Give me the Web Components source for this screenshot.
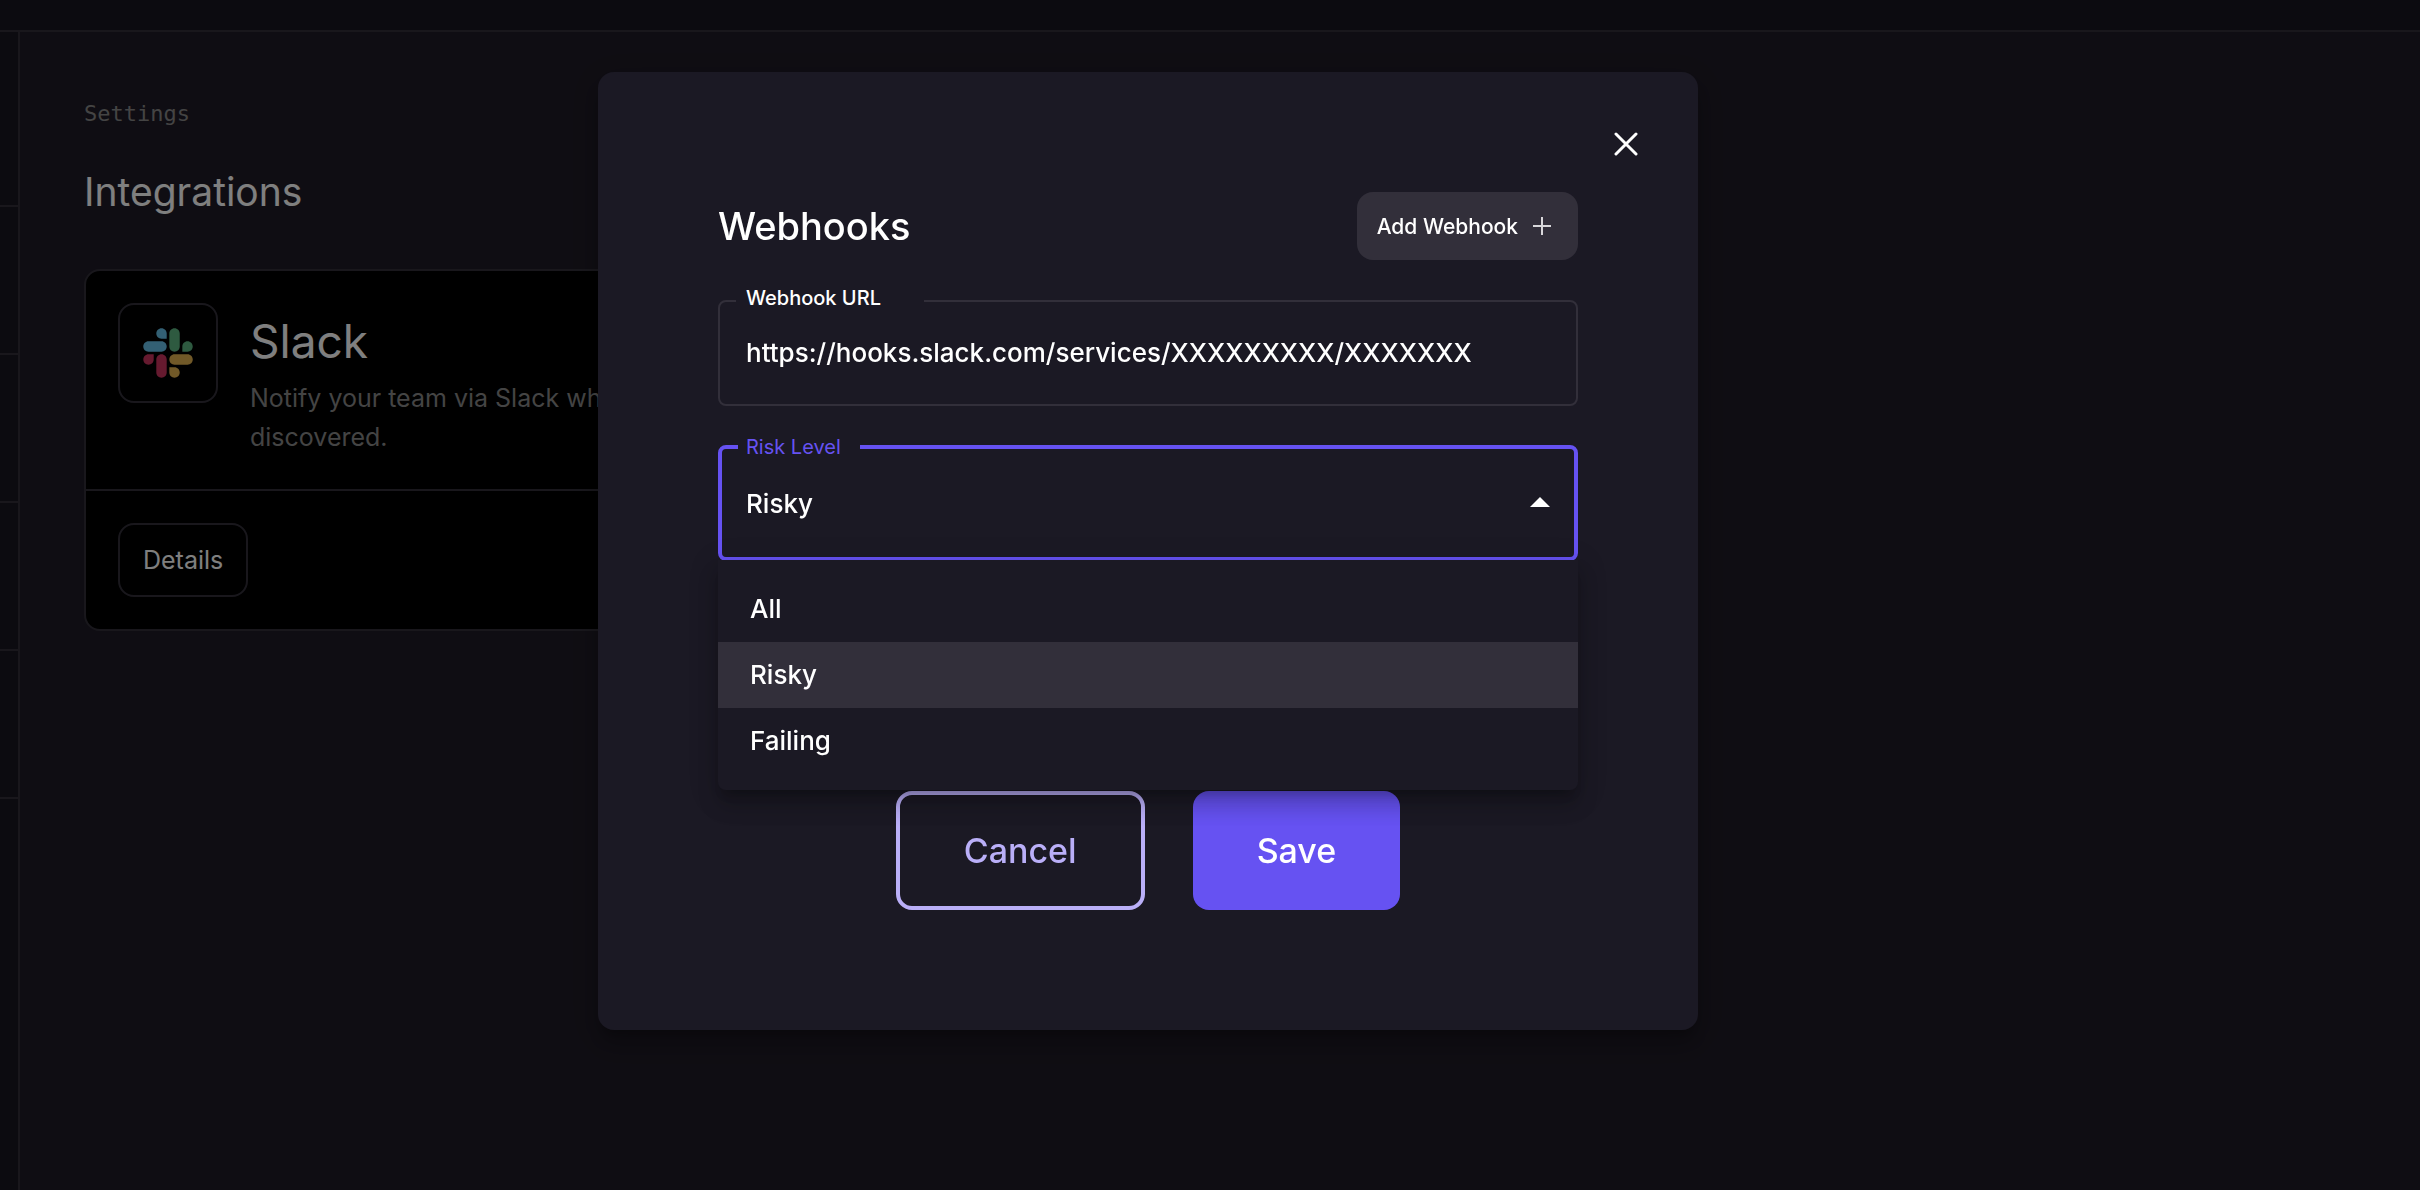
<!DOCTYPE html>
<html lang="en">
<head>
<meta charset="utf-8">
<title>Integrations</title>
<style>
html, body {
    height: 100%;
}
body {
    margin: 0;
    background: #1f1b26;
    color: #fff;
    font-family: Inter, "Liberation Sans", sans-serif;
    --surface: #1b1924;
    --line: #322f3a;
    --accent: #6652f2;
    --accent-light: #baaff8;
}
</style>
</head>
<body>

<app-shell>
    <settings-page section="Settings" heading="Integrations">
        <integration-card name="Slack">
            <slack-logo slot="logo"></slack-logo>
            Notify your team via Slack when issues are discovered.
        </integration-card>
    </settings-page>
</app-shell>

<modal-dialog heading="Webhooks">
    <app-button slot="action" variant="tonal">Add Webhook
        <svg slot="icon" width="20" height="20" viewBox="0 0 20 20" fill="none" stroke="#d8d7da" stroke-width="2"><path d="M10 1v18M1 10h18"/></svg>
    </app-button>
    <text-field label="Webhook URL" value="https://hooks.slack.com/services/XXXXXXXXX/XXXXXXX"></text-field>
    <select-field label="Risk Level" value="Risky" options="All,Risky,Failing"></select-field>
    <app-button slot="footer" variant="outlined">Cancel</app-button>
    <app-button slot="footer" variant="filled">Save</app-button>
</modal-dialog>

<script>
function makeTemplate(html) {
    const template = document.createElement('template');
    template.innerHTML = html;
    return template;
}

class BaseElement extends HTMLElement {
    constructor() {
        super();
        this.attachShadow({mode: 'open'});
        this.shadowRoot.appendChild(this.constructor.template.content.cloneNode(true));
    }

    $(selector) {
        return this.shadowRoot.querySelector(selector);
    }
}

class AppShell extends BaseElement {
    static template = makeTemplate(`
<style>
:host {
    display: grid;
    grid-template: 32px 1fr / 20px 1fr;
    min-height: 100vh;
}
* {
    box-sizing: border-box;
}
header {
    grid-column: 1 / 3;
    background: #181620;
    border-bottom: 2px solid #322f39;
}
nav {
    padding-top: 27px;
    background: #181620;
    border-right: 2px solid #322f39;
}
nav div {
    height: 148px;
    border-bottom: 2px solid #322f39;
}
</style>
<header></header>
<nav><div></div><div></div><div></div><div></div><div></div></nav>
<main><slot></slot></main>
`);
}

class SettingsPage extends BaseElement {
    static template = makeTemplate(`
<style>
:host {
    display: block;
    padding: 64px;
}
p {
    margin: 0 0 36px;
    color: #888;
    font: 22px/36px "DejaVu Sans Mono", monospace;
}
h1 {
    margin: 0 0 53px;
    font-size: 39px;
    line-height: 48px;
    font-weight: 400;
}
.cards {
    display: grid;
    grid-template-columns: repeat(3, 1fr);
    gap: 40px;
}
</style>
<p></p>
<h1></h1>
<div class="cards"><slot></slot></div>
`);

    constructor() {
        super();
        this.$('p').textContent = this.getAttribute('section');
        this.$('h1').textContent = this.getAttribute('heading');
    }
}

class IntegrationCard extends BaseElement {
    static template = makeTemplate(`
<style>
:host {
    display: block;
    border: 2px solid #322f39;
    border-radius: 16px;
    background: #000;
}
.info {
    display: flex;
    gap: 32px;
    padding: 32px;
    border-bottom: 2px solid #322f39;
}
.logo {
    display: grid;
    place-items: center;
    box-sizing: border-box;
    flex: none;
    width: 100px;
    height: 100px;
    border: 2px solid #322f39;
    border-radius: 16px;
}
h2 {
    margin: 0;
    font-size: 46px;
    line-height: 76px;
    font-weight: 400;
}
p {
    margin: 0;
    color: #888;
    font-size: 25px;
    line-height: 39px;
}
.actions {
    display: flex;
    padding: 32px;
}
button {
    height: 74px;
    padding: 0 23px;
    border: 2px solid #322f39;
    border-radius: 16px;
    background: none;
    color: inherit;
    font: inherit;
    font-size: 25px;
}
</style>
<div class="info">
    <div class="logo"><slot name="logo"></slot></div>
    <div>
    <h2></h2>
    <p><slot></slot></p>
    </div>
</div>
<div class="actions"><button type="button">Details</button></div>
`);

    constructor() {
        super();
        this.$('h2').textContent = this.getAttribute('name');
    }
}

class SlackLogo extends BaseElement {
    static template = makeTemplate(`
<style>
:host, svg {
    display: block;
}
</style>
<svg width="50" height="50" viewBox="0 0 127 127" aria-hidden="true">
<path fill="#cc345f" d="M27.2 80c0 7.3-5.9 13.2-13.2 13.2S.8 87.3.8 80s5.9-13.2 13.2-13.2h13.2V80zm6.6 0c0-7.3 5.9-13.2 13.2-13.2s13.2 5.9 13.2 13.2v33c0 7.3-5.9 13.2-13.2 13.2s-13.2-5.9-13.2-13.2V80z"/>
<path fill="#66c0e8" d="M47 27c-7.3 0-13.2-5.9-13.2-13.2S39.7.6 47 .6s13.2 5.9 13.2 13.2V27H47zm0 6.7c7.3 0 13.2 5.9 13.2 13.2S54.3 60.1 47 60.1H13.9C6.6 60.1.7 54.2.7 46.9s5.9-13.2 13.2-13.2H47z"/>
<path fill="#5cb480" d="M99.9 46.9c0-7.3 5.9-13.2 13.2-13.2s13.2 5.9 13.2 13.2-5.9 13.2-13.2 13.2H99.9V46.9zm-6.6 0c0 7.3-5.9 13.2-13.2 13.2s-13.2-5.9-13.2-13.2V13.8C66.9 6.5 72.8.6 80.1.6s13.2 5.9 13.2 13.2v33.1z"/>
<path fill="#e2b250" d="M80.1 99.8c7.3 0 13.2 5.9 13.2 13.2s-5.9 13.2-13.2 13.2-13.2-5.9-13.2-13.2V99.8h13.2zm0-6.6c-7.3 0-13.2-5.9-13.2-13.2s5.9-13.2 13.2-13.2h33.1c7.3 0 13.2 5.9 13.2 13.2s-5.9 13.2-13.2 13.2H80.1z"/>
</svg>
`);
}

class ModalDialog extends BaseElement {
    static template = makeTemplate(`
<style>
:host {
    position: fixed;
    inset: 0;
    display: flex;
    justify-content: center;
    align-items: flex-start;
    padding: 72px 124px 72px 0;
    background: rgba(0, 0, 0, .5);
}
.paper {
    position: relative;
    box-sizing: border-box;
    width: 1100px;
    max-width: 100%;
    padding: 120px;
    border-radius: 16px;
    background: var(--surface);
    box-shadow: 0 10px 10px -6px rgba(0, 0, 0, .2), 0 16px 20px 2px rgba(0, 0, 0, .14), 0 6px 28px 4px rgba(0, 0, 0, .12);
}
.close {
    position: absolute;
    top: 52px;
    right: 52px;
    padding: 8px;
    border: 0;
    background: none;
}
svg {
    display: block;
}
header {
    display: flex;
    justify-content: space-between;
    align-items: center;
    margin-bottom: 40px;
}
h2 {
    margin: 0;
    font-size: 38px;
    line-height: 48px;
    font-weight: 500;
}
.fields {
    display: grid;
    gap: 39px;
}
footer {
    display: flex;
    justify-content: center;
    gap: 48px;
    margin-top: 230px;
}
</style>
<section class="paper" role="dialog" aria-labelledby="title">
    <button class="close" type="button" aria-label="Close">
        <svg width="24" height="24" viewBox="0 0 24 24" fill="none" stroke="#fff" stroke-width="3" stroke-linecap="round"><path d="M2 2l20 20M22 2L2 22"/></svg>
    </button>
    <header>
        <h2 id="title"></h2>
        <slot name="action"></slot>
    </header>
    <div class="fields"><slot></slot></div>
    <footer><slot name="footer"></slot></footer>
</section>
`);

    constructor() {
        super();
        this.$('h2').textContent = this.getAttribute('heading');
    }

    connectedCallback() {
        this.$('.close').addEventListener('click', () => this.remove());
    }
}

class AppButton extends BaseElement {
    static template = makeTemplate(`
<style>
:host {
    display: block;
}
button {
    display: flex;
    align-items: center;
    gap: 14px;
    box-sizing: border-box;
    height: 119px;
    padding: 0 64px;
    border: 0;
    border-radius: 16px;
    color: #fff;
    font: inherit;
    font-size: 34px;
    font-weight: 500;
}
:host([variant="tonal"]) button {
    height: 68px;
    padding: 0 26px 0 20px;
    background: var(--line);
    font-size: 21px;
}
:host([variant="outlined"]) button {
    border: 4px solid var(--accent-light);
    background: none;
    color: var(--accent-light);
}
:host([variant="filled"]) button {
    background: var(--accent);
}
</style>
<button type="button"><span><slot></slot></span><slot name="icon"></slot></button>
`);
}

// shared by the text box and the drop-down
const fieldStyle = `
:host {
    display: block;
    position: relative;
}
.box {
    position: relative;
    box-sizing: border-box;
    border: 2px solid var(--line);
    border-radius: 8px;
}
label {
    position: absolute;
    top: -16px;
    left: 16px;
    box-sizing: border-box;
    padding-left: 10px;
    background: var(--surface);
    font-size: 20px;
    line-height: 24px;
    font-weight: 500;
}
input, select {
    display: block;
    box-sizing: border-box;
    width: 100%;
    height: 100%;
    margin: 0;
    border: 0;
    outline: 0;
    background: none;
    color: inherit;
    font: inherit;
    font-size: 26px;
    font-weight: 450;
    appearance: none;
}
`;

class TextField extends BaseElement {
    static template = makeTemplate(`
<style>
${fieldStyle}
.box {
    height: 106px;
}
label {
    width: 188px;
}
input {
    padding: 0 26px 2px;
}
</style>
<div class="box">
    <input id="control" type="text">
    <label for="control"></label>
</div>
`);

    constructor() {
        super();
        this.$('label').textContent = this.getAttribute('label');
        this.$('input').value = this.getAttribute('value');
    }
}

class SelectField extends BaseElement {
    static template = makeTemplate(`
<style>
${fieldStyle}
.box {
    height: 116px;
    border: 4px solid var(--accent);
}
label {
    top: -14px;
    width: 122px;
    padding-left: 8px;
    color: var(--accent);
    font-weight: 400;
}
select {
    padding: 0 24px;
}
svg {
    position: absolute;
    top: 48px;
    right: 24px;
}
ul {
    position: absolute;
    top: 115px;
    left: 0;
    right: 0;
    margin: 0;
    padding: 16px 0;
    border-radius: 0 0 8px 8px;
    background: var(--surface);
    box-shadow: 0 10px 10px -6px rgba(0, 0, 0, .2), 0 16px 20px 2px rgba(0, 0, 0, .14), 0 6px 28px 4px rgba(0, 0, 0, .12);
    list-style: none;
}
li {
    padding: 0 32px;
    font-size: 26px;
    line-height: 66px;
    font-weight: 500;
}
li[aria-selected="true"] {
    background: var(--line);
}
</style>
<div class="box">
    <select id="control"></select>
    <label for="control"></label>
    <svg width="20" height="10" viewBox="0 0 20 10" fill="#fff"><path d="M0 10L10 0l10 10z"/></svg>
</div>
<ul role="listbox"></ul>
`);

    constructor() {
        super();
        this.$('label').textContent = this.getAttribute('label');
        for (const name of this.getAttribute('options').split(',')) {
            this.$('select').add(new Option(name, name));
            const item = document.createElement('li');
            item.setAttribute('role', 'option');
            item.textContent = name;
            item.addEventListener('click', () => this.choose(name));
            this.$('ul').appendChild(item);
        }
        this.choose(this.getAttribute('value'));
    }

    choose(name) {
        this.$('select').value = name;
        for (const item of this.$('ul').children) {
            item.setAttribute('aria-selected', item.textContent === name);
        }
    }
}

customElements.define('app-shell', AppShell);
customElements.define('settings-page', SettingsPage);
customElements.define('integration-card', IntegrationCard);
customElements.define('slack-logo', SlackLogo);
customElements.define('modal-dialog', ModalDialog);
customElements.define('app-button', AppButton);
customElements.define('text-field', TextField);
customElements.define('select-field', SelectField);
</script>
</body>
</html>
